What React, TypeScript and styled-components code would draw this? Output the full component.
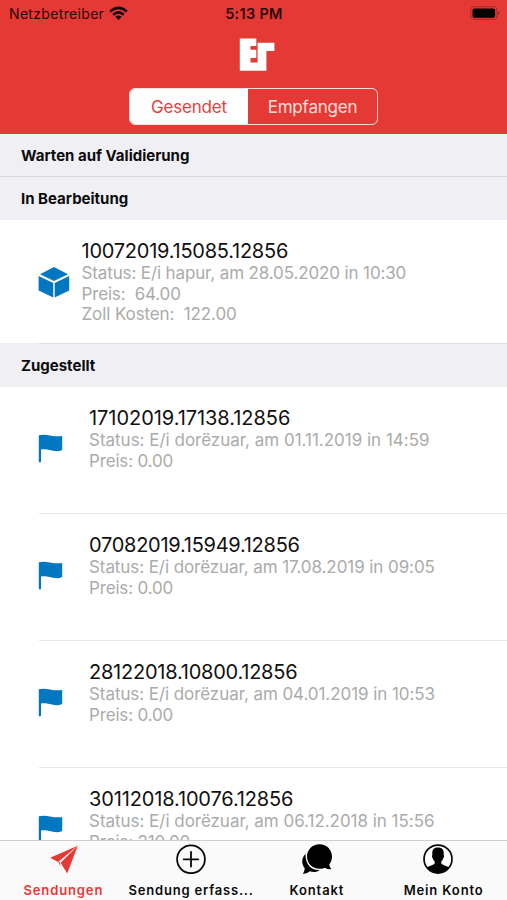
import React from "react";
import styled, { createGlobalStyle } from "styled-components";

const GlobalStyle = createGlobalStyle`
  * { box-sizing: border-box; }
  body { margin: 0; background: #fff; font-family: Inter, "Liberation Sans", sans-serif; }
`;

const Screen = styled.div`
  width: 507px;
  height: 900px;
  display: flex;
  flex-direction: column;
  overflow: hidden;
  background: #fff;
`;

const Header = styled.header`
  flex: none;
  height: 134px;
  background: #e53935;
  display: flex;
  flex-direction: column;
  align-items: center;
`;

const StatusBar = styled.div`
  width: 100%;
  height: 27px;
  padding: 0 7px 0 9px;
  display: grid;
  grid-template-columns: 1fr auto 1fr;
  align-items: center;
  color: #2a0706;
  font-size: 14px;
  line-height: 27px;
`;

const Carrier = styled.div`
  display: flex;
  align-items: center;
  gap: 5px;
  letter-spacing: 0.33px;
`;

const Clock = styled.div`
  margin-right: 1px;
  font-weight: 600;
  font-size: 14.5px;
  letter-spacing: 0.3px;
`;

const Battery = styled.div`
  display: flex;
  justify-content: flex-end;
`;

const Logo = styled.svg`
  display: block;
  margin: 11px 0 17px 7px;
`;

const Segments = styled.div`
  width: 249px;
  height: 37px;
  display: flex;
  border: 1.5px solid #ffe0dd;
  border-radius: 6px;
  overflow: hidden;
`;

const Segment = styled.button<{ $active?: boolean }>`
  width: ${(p) => (p.$active ? "118px" : "129px")};
  padding: 0;
  border: 0;
  font: 400 17px Inter, sans-serif;
  letter-spacing: -0.2px;
  color: ${(p) => (p.$active ? "#e5423e" : "#ffe0dd")};
  background: ${(p) => (p.$active ? "#fff" : "transparent")};
`;

const List = styled.main`
  flex: 1;
  min-height: 0;
  overflow: hidden;
`;

const SectionTitle = styled.h2<{ $divided?: boolean }>`
  height: 43px;
  margin: 0;
  padding-left: 21px;
  background: #efeff4;
  border-bottom: ${(p) => (p.$divided ? "1px solid #d9d9dd" : "0")};
  font-size: 15px;
  font-weight: 700;
  line-height: 43px;
  color: #0c0c0e;
`;

const InsetSectionTitle = styled(SectionTitle)`
  height: 44px;
  line-height: 42px;
  &::before {
    content: "";
    display: block;
    height: 1px;
    margin: 0 0 0 18px;
    border-top: 1px solid #dddde1;
  }
`;

const Row = styled.article<{ $open?: boolean }>`
  height: ${(p) => (p.$open ? "123px" : "127px")};
  margin-left: 39px;
  border-bottom: ${(p) => (p.$open ? "0" : "1px solid #e8e8ea")};
  display: grid;
  grid-template-columns: ${(p) => (p.$open ? "42.5px" : "50px")} 1fr;
`;

const RowIcon = styled.div`
  padding-top: 47px;
  margin-left: -1px;
  svg { display: block; }
`;

const RowText = styled.div`
  padding-top: 19px;
`;

const Code = styled.h3<{ $tracking: number }>`
  margin: 0;
  font-size: 20px;
  font-weight: 400;
  line-height: 24px;
  letter-spacing: ${(p) => p.$tracking}px;
  color: #111;
`;

const Detail = styled.p<{ $tracking?: number }>`
  margin: 0;
  white-space: pre;
  font-size: 17px;
  line-height: 20.5px;
  letter-spacing: ${(p) => p.$tracking ?? -0.16}px;
  color: #ababab;
`;

const TabBar = styled.nav`
  flex: none;
  height: 60px;
  background: #fafafa;
  border-top: 1px solid #cfcfcf;
  display: grid;
  grid-template-columns: repeat(4, 1fr);
`;

const Tab = styled.button<{ $active?: boolean; $iconShift?: number }>`
  min-width: 0;
  padding: 3px 0 0;
  border: 0;
  background: none;
  display: flex;
  flex-direction: column;
  align-items: center;
  gap: 7px;
  font: 600 13px/18px Inter, sans-serif;
  letter-spacing: 0.88px;
  white-space: nowrap;
  color: ${(p) => (p.$active ? "#e53935" : "#0b0b0b")};
  svg {
    display: block;
    flex: none;
    margin-left: ${(p) => p.$iconShift ?? 0}px;
  }
`;

const TabLabel = styled.span<{ $long?: boolean }>`
  padding-left: ${(p) => (p.$long ? "2px" : "0")};
  letter-spacing: ${(p) => (p.$long ? "0.8px" : "inherit")};
`;

const WifiIcon = () => (
  <svg width="19" height="15" viewBox="0 0 19 15" fill="none" stroke="#160303" strokeWidth="2.5">
    <path d="M1.2 5.6Q9.5-1.8 17.8 5.6" />
    <path d="M4.2 8.7Q9.5 4 14.8 8.7" />
    <path d="M6.4 10.8Q9.5 8.2 12.6 10.8L9.5 14Z" fill="#160303" stroke="none" />
  </svg>
);

const BatteryIcon = () => (
  <svg width="30" height="15" viewBox="0 0 30 15">
    <rect x="0.8" y="0.8" width="26" height="12.6" rx="3.2" fill="none" stroke="#a82b28" strokeWidth="1.1" />
    <rect x="2.5" y="2.6" width="22.6" height="9.2" rx="1.8" fill="#000" />
    <path d="M28 5.2Q30.4 7.1 28 9Z" fill="#8f2421" />
  </svg>
);

const CubeIcon = () => (
  <svg width="32" height="32" viewBox="0 0 32 32" fill="#0077c0">
    <path d="M16 0L30 7.2 16 14 2 7.2Z" />
    <path d="M.6 9L15.2 15.9V30.4L.6 23.4Z" />
    <path d="M31.2 9L16.7 15.9V30.4L31.2 23.4Z" />
  </svg>
);

const FlagIcon = () => (
  <svg width="26" height="29" viewBox="0 0 26 29" fill="#0077c0">
    <path d="M.8 1.3C3.8.3 8 .6 12 1.4S20 2.6 24.2 2V16C20 17.9 15.6 17.2 11.6 16S5.6 15.2 3 15.5V27.8Q1.9 29.3 .8 27.8Z" />
  </svg>
);

const PlaneIcon = () => (
  <svg width="30" height="30" viewBox="0 0 30 30" fill="#e53935">
    <path d="M28.8 1.8L1.2 13.8 9 18.1Z" />
    <path d="M28.8 1.8L11.6 18.8 18.2 29.4Z" />
    <path d="M9.2 17.2L11 18.2 11.2 22.6Z" />
  </svg>
);

const PlusIcon = () => (
  <svg width="30" height="30" viewBox="0 0 30 30" fill="none" stroke="#080808" strokeWidth="1.8">
    <circle cx="15" cy="15.3" r="13.9" />
    <path d="M15 8V22.6M7.7 15.3H22.3" strokeLinecap="round" />
  </svg>
);

const ChatIcon = () => (
  <svg width="30" height="30" viewBox="0 0 30 30" fill="#000">
    <path d="M3.6 10C-.8 13.8-.7 20.2 2.7 24Q2.8 27.5.9 29.9 5.7 29.5 7.8 27.2C11.5 28.6 15 28 17.6 25.9 9.4 26.8 2.9 19.6 3.6 10Z" />
    <path d="M17.6.2C10.4.2 5 5.7 5 12.5S10.4 24.8 17.6 24.8C19.8 24.8 21.4 24.4 23 23.7Q25.6 25.6 29.4 25.2 27.6 23.2 27.2 20.5C29 18.3 30 15.7 30 12.5 30 5.7 24.6.2 17.6.2Z" />
  </svg>
);

const PersonIcon = () => (
  <svg width="30" height="30" viewBox="0 0 30 30">
    <circle cx="15" cy="15.1" r="14" fill="#fff" stroke="#080808" strokeWidth="1.7" />
    <path d="M3.7 23.3C5.2 22.4 8.5 21.5 10.8 20.2 12.2 19.4 12 18.4 11.3 17.1 10.4 16.6 10.1 14.6 9.3 13.4 8.7 12.4 9.1 11.4 9.4 10.6 8.7 5.7 11 3.5 15 3.5S21.3 5.7 20.6 10.6C20.9 11.4 21.3 12.4 20.7 13.4 19.9 14.6 19.6 16.6 18.7 17.1 18 18.4 17.8 19.4 19.2 20.2 21.5 21.5 24.8 22.4 26.3 23.3 20.3 30.9 9.7 30.9 3.7 23.3Z" />
  </svg>
);

const delivered = [
  { code: "17102019.17138.12856", when: "01.11.2019 in 14:59", price: "0.00", codeTracking: -0.05, statusTracking: -0.01 },
  { code: "07082019.15949.12856", when: "17.08.2019 in 09:05", price: "0.00", codeTracking: -0.26, statusTracking: -0.08 },
  { code: "28122018.10800.12856", when: "04.01.2019 in 10:53", price: "0.00", codeTracking: -0.23, statusTracking: -0.07 },
  { code: "30112018.10076.12856", when: "06.12.2018 in 15:56", price: "210.00", codeTracking: -0.14, statusTracking: -0.03 },
];

export default function App() {
  return (
    <>
      <GlobalStyle />
      <Screen>
        <Header>
          <StatusBar>
            <Carrier>Netzbetreiber <WifiIcon /></Carrier>
            <Clock>5:13 PM</Clock>
            <Battery><BatteryIcon /></Battery>
          </StatusBar>
          <Logo width="36" height="33" viewBox="0 0 36 33" fill="#fff">
            <path d="M.8 .5H17.3V8H11.5V11.8H17.3V20H11.5V24.5H18.6V4.8H35.4V13H27.4V32.8H.8Z" />
          </Logo>
          <Segments>
            <Segment $active>Gesendet</Segment>
            <Segment>Empfangen</Segment>
          </Segments>
        </Header>
        <List>
          <SectionTitle $divided>Warten auf Validierung</SectionTitle>
          <SectionTitle>In Bearbeitung</SectionTitle>
          <Row $open>
            <RowIcon><CubeIcon /></RowIcon>
            <RowText>
              <Code $tracking={-0.24}>10072019.15085.12856</Code>
              <Detail $tracking={-0.13}>Status: E/i hapur, am 28.05.2020 in 10:30</Detail>
              <Detail>{"Preis:  64.00"}</Detail>
              <Detail $tracking={-0.1}>{"Zoll Kosten:  122.00"}</Detail>
            </RowText>
          </Row>
          <InsetSectionTitle>Zugestellt</InsetSectionTitle>
          {delivered.map((item) => (
            <Row key={item.code}>
              <RowIcon><FlagIcon /></RowIcon>
              <RowText>
                <Code $tracking={item.codeTracking}>{item.code}</Code>
                <Detail $tracking={item.statusTracking}>Status: E/i dorëzuar, am {item.when}</Detail>
                <Detail>Preis: {item.price}</Detail>
              </RowText>
            </Row>
          ))}
        </List>
        <TabBar>
          <Tab $active $iconShift={1}><PlaneIcon /><TabLabel>Sendungen</TabLabel></Tab>
          <Tab $iconShift={1}><PlusIcon /><TabLabel $long>Sendung erfass...</TabLabel></Tab>
          <Tab><ChatIcon /><TabLabel>Kontakt</TabLabel></Tab>
          <Tab $iconShift={-12}><PersonIcon /><TabLabel>Mein Konto</TabLabel></Tab>
        </TabBar>
      </Screen>
    </>
  );
}
